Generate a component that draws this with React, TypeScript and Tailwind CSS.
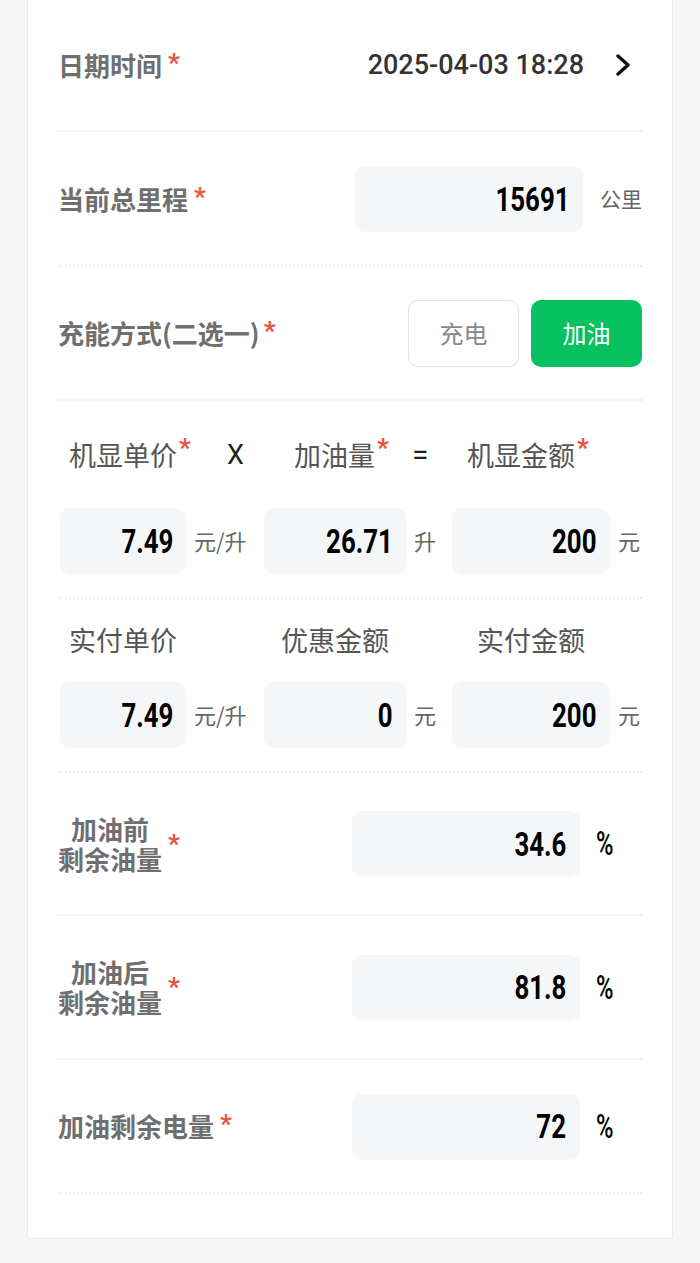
import React from "react";

const CJK = "font-['Noto_Sans_CJK_SC',sans-serif]";
const NUM = "font-['Roboto','Noto_Sans_CJK_SC',sans-serif]";

function Star({ className = "" }: { className?: string }) {
  return (
    <span className={`text-[#e8553d] text-[26px] leading-none font-bold ${NUM} ${className}`}>*</span>
  );
}

function Divider() {
  return <div className="border-t-2 border-dotted border-[#efefef]" />;
}

function Value({ value, boxW, unit }: { value: string; boxW: string; unit: string }) {
  return (
    <div className="flex items-center">
      <div className={`${boxW} h-[65px] rounded-[10px] bg-[#f5f6f7] shadow-[0_1px_2px_rgba(0,0,0,0.04)] flex items-center justify-end pr-[13px]`}>
        <span className={`inline-block origin-right scale-x-[0.76] text-[34px] font-bold text-black leading-none ${NUM}`}>
          {value}
        </span>
      </div>
      <span className={`ml-[8px] text-[22px] text-[#666] ${CJK}`}>{unit}</span>
    </div>
  );
}

function PctField({ value }: { value: string }) {
  return (
    <div className="flex items-center">
      <div className="w-[228px] h-[65px] rounded-[10px] bg-[#f5f6f7] shadow-[0_1px_2px_rgba(0,0,0,0.04)] flex items-center justify-end pr-[14px]">
        <span className={`inline-block origin-right scale-x-[0.76] text-[34px] font-bold text-black leading-none ${NUM}`}>{value}</span>
      </div>
      <div className="w-[62px] pl-[16px]">
        <span className={`inline-block origin-left scale-x-[0.72] text-[33px] font-medium text-black leading-none ${NUM}`}>%</span>
      </div>
    </div>
  );
}

function TwoLine({ top }: { top: string }) {
  return (
    <div className="flex items-center">
      <div className="flex flex-col items-center gap-[2px] text-[26px] font-semibold text-[#6f6f6f] leading-[28px]">
        <span>{top}</span>
        <span>剩余油量</span>
      </div>
      <Star className="ml-[6px]" />
    </div>
  );
}

export default function App() {
  return (
    <div className="min-h-[1263px] bg-[#f7f7f7] px-[27px] pb-[26px]">
      <div className={`bg-white border-x border-b border-[#ececec] rounded-b-[4px] px-[30px] pb-[44px] ${CJK}`}>
        {/* 日期时间 */}
        <div className="h-[130px] flex items-center justify-between">
          <div className="flex items-start">
            <span className="text-[26px] font-semibold text-[#6f6f6f] leading-[34px]">日期时间</span>
            <Star className="ml-[6px] mt-[2px]" />
          </div>
          <div className="flex items-center">
            <span className={`text-[27px] font-medium text-[#333] ${NUM}`}>2025-04-03 18:28</span>
            <svg className="ml-[30px] mr-[10px]" width="18" height="22" viewBox="0 0 18 22" fill="none">
              <polyline points="4,2 14,11 4,20" stroke="#111" strokeWidth="3.4" strokeLinecap="round" strokeLinejoin="round" />
            </svg>
          </div>
        </div>
        <Divider />

        {/* 当前总里程 */}
        <div className="h-[133px] flex items-center justify-between">
          <div className="flex items-start">
            <span className="text-[26px] font-semibold text-[#6f6f6f] leading-[34px]">当前总里程</span>
            <Star className="ml-[6px] mt-[2px]" />
          </div>
          <div className="flex items-center">
            <div className="w-[228px] h-[65px] rounded-[10px] bg-[#f5f6f7] shadow-[0_1px_2px_rgba(0,0,0,0.04)] flex items-center justify-end pr-[13px]">
              <span className={`inline-block origin-right scale-x-[0.76] text-[34px] font-bold text-black leading-none ${NUM}`}>15691</span>
            </div>
            <span className="ml-[17px] text-[21px] text-[#666]">公里</span>
          </div>
        </div>
        <Divider />

        {/* 充能方式 */}
        <div className="h-[132px] flex items-center justify-between">
          <div className="flex items-start">
            <span className="text-[26px] font-semibold text-[#6f6f6f] leading-[34px]">充能方式(二选一)</span>
            <Star className="ml-[4px] mt-[2px]" />
          </div>
          <div className="flex items-center gap-[12px]">
            <div className="w-[111px] h-[67px] rounded-[10px] border border-[#e3e3e3] bg-white flex items-center justify-center text-[24px] text-[#888]">
              充电
            </div>
            <div className="w-[111px] h-[67px] rounded-[10px] bg-[#07c160] flex items-center justify-center text-[24px] text-white">
              加油
            </div>
          </div>
        </div>
        <Divider />

        {/* 机显 */}
        <div className="pt-[36px] pb-[24px]">
          <div className="flex items-start h-[36px] text-[27px] text-[#555] leading-[36px]">
            <div className="w-[158px] pl-[11px] flex items-start">
              <span>机显单价</span>
              <Star className="ml-[2px] -mt-[2px]" />
            </div>
            <div className={`w-[78px] pl-[11px] text-[27px] text-[#222] ${NUM}`}>X</div>
            <div className="w-[111px] flex items-start">
              <span>加油量</span>
              <Star className="ml-[2px] -mt-[2px]" />
            </div>
            <div className={`w-[54px] pl-[7px] text-[30px] text-[#222] ${NUM}`}>=</div>
            <div className="pl-[8px] flex items-start">
              <span>机显金额</span>
              <Star className="ml-[2px] -mt-[2px]" />
            </div>
          </div>
          <div className="flex items-center mt-[35px]">
            <div className="w-[206px] pl-[2px]">
              <Value value="7.49" boxW="w-[126px]" unit="元/升" />
            </div>
            <div className="w-[188px]">
              <Value value="26.71" boxW="w-[142px]" unit="升" />
            </div>
            <div>
              <Value value="200" boxW="w-[158px]" unit="元" />
            </div>
          </div>
        </div>
        <Divider />

        {/* 实付 */}
        <div className="pt-[23px] pb-[24px]">
          <div className="flex items-start h-[36px] text-[27px] text-[#555] leading-[36px]">
            <div className="w-[223px] pl-[11px]">实付单价</div>
            <div className="w-[196px]">优惠金额</div>
            <div>实付金额</div>
          </div>
          <div className="flex items-center mt-[24px]">
            <div className="w-[206px] pl-[2px]">
              <Value value="7.49" boxW="w-[126px]" unit="元/升" />
            </div>
            <div className="w-[188px]">
              <Value value="0" boxW="w-[142px]" unit="元" />
            </div>
            <div>
              <Value value="200" boxW="w-[158px]" unit="元" />
            </div>
          </div>
        </div>
        <Divider />

        {/* 加油前 */}
        <div className="h-[141px] flex items-center justify-between">
          <TwoLine top="加油前" />
          <PctField value="34.6" />
        </div>
        <Divider />

        {/* 加油后 */}
        <div className="h-[142px] flex items-center justify-between">
          <TwoLine top="加油后" />
          <PctField value="81.8" />
        </div>
        <Divider />

        {/* 加油剩余电量 */}
        <div className="h-[132px] flex items-center justify-between">
          <div className="flex items-start">
            <span className="text-[26px] font-semibold text-[#6f6f6f] leading-[34px]">加油剩余电量</span>
            <Star className="ml-[6px] mt-[2px]" />
          </div>
          <PctField value="72" />
        </div>
        <Divider />
      </div>
    </div>
  );
}
